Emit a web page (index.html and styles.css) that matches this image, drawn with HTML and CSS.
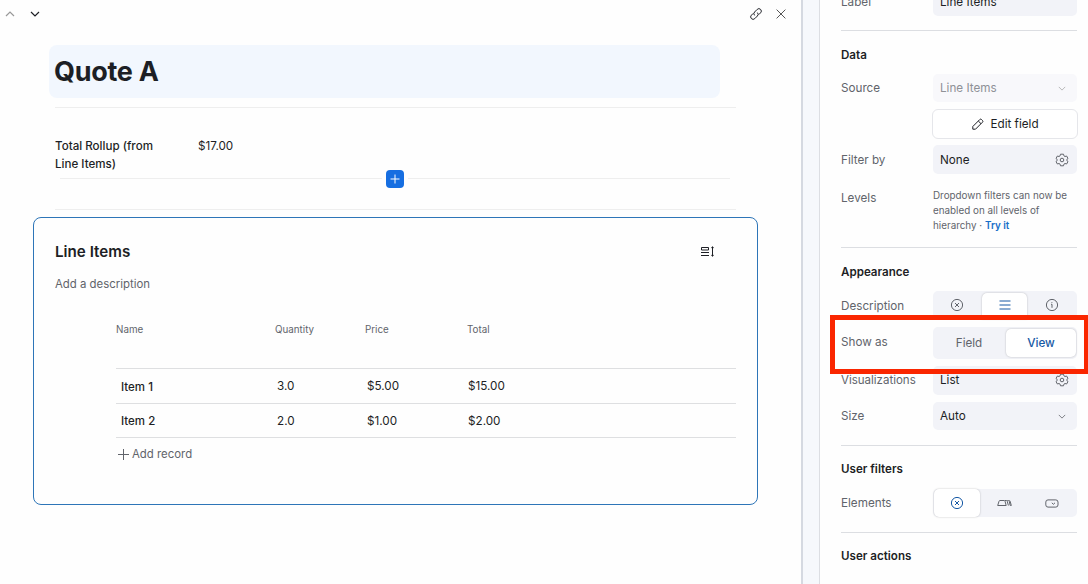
FILE: index.html
```
<!DOCTYPE html>
<html lang="en">
<head>
    <meta charset="UTF-8">
    <meta name="viewport" content="width=device-width, initial-scale=1.0">
    <title>Quote A</title>
    <link rel="stylesheet" href="styles.css">
</head>
<body>
    <!-- Shared icons -->
    <svg class="sprite" width="0" height="0">
        <symbol id="chevron" viewBox="0 0 10 6"><path d="M1 1l4 4 4-4"/></symbol>
        <symbol id="circle-x" viewBox="0 0 14 14"><circle cx="7" cy="7" r="5.6"/><path d="M5 5l4 4M9 5L5 9"/></symbol>
        <symbol id="gear" viewBox="0 0 14 14">
            <path d="M5.5 1.2h3l.4 1.6 1.1.7 1.6-.5 1.4 2.5-1.2 1v1l1.2 1-1.4 2.5-1.6-.5-1.1.7-.4 1.6h-3l-.4-1.6-1.1-.7-1.6.5L1 8.500l1.200-1v-1L1 5.500 2.400 3l1.600.5 1.100-.7z"/>
            <circle cx="7" cy="7" r="1.8"/>
        </symbol>
    </svg>

    <main class="record">
        <header class="toolbar">
            <svg class="icon chevron up" width="10" height="6"><use href="#chevron"/></svg>
            <svg class="icon chevron" width="10" height="6"><use href="#chevron"/></svg>
            <svg class="icon link" width="14" height="14" viewBox="0 0 14 14">
                <path d="M5.6 8.4a2.4 2.4 0 0 1 0-3.4l2.6-2.6a2.4 2.4 0 0 1 3.4 3.4L9.8 7.6"/>
                <path d="M8.4 5.6a2.4 2.4 0 0 1 0 3.4l-2.6 2.6a2.4 2.4 0 0 1-3.4-3.4L4.2 6.4"/>
            </svg>
            <svg class="icon close" width="10" height="10" viewBox="0 0 10 10"><path d="M.6.6l8.800 8.800M9.400.6L.6 9.400"/></svg>
        </header>

        <h1 class="title">Quote A</h1>

        <section class="fields">
            <div class="field">
                <span class="field-name">Total Rollup (from Line Items)</span>
                <span>$17.00</span>
            </div>
            <div class="insert">
                <span class="insert-line"></span>
                <button class="insert-btn">
                    <svg class="icon" width="10" height="10" viewBox="0 0 10 10"><path d="M5 .5v9M.5 5h9"/></svg>
                </button>
                <span class="insert-line"></span>
            </div>
        </section>

        <section class="card">
            <div class="card-head">
                <h2>Line Items</h2>
                <svg class="icon row-height" width="14" height="11" viewBox="0 0 14 11">
                    <path d="M1.5 1.5h7v2.500h-7zM1 6.500h8M1 9.500h8M12.500 1v9M11.300 1.800l1.200-1 1.200 1M11.300 9.200l1.200 1 1.200-1"/>
                </svg>
            </div>
            <p class="description">Add a description</p>
            <div class="table">
                <div class="row head"><span>Name</span><span>Quantity</span><span>Price</span><span>Total</span></div>
                <div class="row"><span class="name">Item 1</span><span>3.0</span><span>$5.00</span><span>$15.00</span></div>
                <div class="row"><span class="name">Item 2</span><span>2.0</span><span>$1.00</span><span>$2.00</span></div>
                <div class="add">
                    <svg class="icon" width="11" height="11" viewBox="0 0 11 11"><path d="M5.500 0v11M0 5.500h11"/></svg>
                    <span>Add record</span>
                </div>
            </div>
        </section>
    </main>

    <aside class="panel">
        <section class="group">
            <div class="setting">
                <label>Label</label>
                <div class="control">Line Items</div>
            </div>
        </section>

        <section class="group">
            <h3>Data</h3>
            <div class="setting">
                <label>Source</label>
                <div class="control disabled">Line Items <svg class="icon" width="8" height="5"><use href="#chevron"/></svg></div>
            </div>
            <button class="edit-btn">
                <svg class="icon" width="12" height="12" viewBox="0 0 12 12"><path d="M.8 11.200v-2.700l7-7a1.200 1.200 0 0 1 1.700 0l1 1a1.200 1.200 0 0 1 0 1.700l-7 7zM6.300 3l2.700 2.700"/></svg>
                Edit field
            </button>
            <div class="setting tall">
                <label>Filter by</label>
                <div class="control">None <svg class="icon gear" width="14" height="14"><use href="#gear"/></svg></div>
            </div>
            <div class="setting levels">
                <label>Levels</label>
                <p>Dropdown filters can now be enabled on all levels of hierarchy · <a>Try it</a></p>
            </div>
        </section>

        <section class="group">
            <h3>Appearance</h3>
            <div class="setting desc">
                <label>Description</label>
                <div class="segments">
                    <span><svg class="icon" width="14" height="14"><use href="#circle-x"/></svg></span>
                    <span class="active"><svg class="icon" width="12" height="10" viewBox="0 0 12 10"><path d="M.5 1h11M.5 5h11M.5 9h11"/></svg></span>
                    <span><svg class="icon" width="14" height="14" viewBox="0 0 14 14"><circle cx="7" cy="7" r="5.600"/><path d="M6 6.300h1v3.500M6.900 4v.8"/></svg></span>
                </div>
            </div>
            <div class="setting show-as">
                <label>Show as</label>
                <div class="segments two">
                    <span>Field</span>
                    <span class="active">View</span>
                </div>
                <div class="highlight"></div>
            </div>
            <div class="setting tall visual">
                <label>Visualizations</label>
                <div class="control">List <svg class="icon gear" width="14" height="14"><use href="#gear"/></svg></div>
            </div>
            <div class="setting size">
                <label>Size</label>
                <div class="control">Auto <svg class="icon" width="8" height="5"><use href="#chevron"/></svg></div>
            </div>
        </section>

        <section class="group filters">
            <h3>User filters</h3>
            <div class="setting">
                <label>Elements</label>
                <div class="segments">
                    <span class="active"><svg class="icon" width="14" height="14"><use href="#circle-x"/></svg></span>
                    <span><svg class="icon" width="15" height="8" viewBox="0 0 15 8"><path d="M9.200 6.500H.7L2 2.300Q2.300 1.500 3 1.500h4.200q.6 0 .8.700zM8 1.500h1.500q.5 0 .7.700l1.200 4.300M10.300 1.500h1.200q.5 0 .7.700l1 4.300M12.300 1.500q.6 0 .8.700l1.200 4.300h-1"/></svg></span>
                    <span><svg class="icon" width="14" height="9" viewBox="0 0 14 9"><rect x=".8" y=".9" width="12.200" height="7.200" rx="2.200"/><path d="M6.800 3.800l1.600 1.500L10 3.800"/></svg></span>
                </div>
            </div>
        </section>

        <section class="group last">
            <h3>User actions</h3>
        </section>
    </aside>
</body>
</html>
```

FILE: styles.css
```
* {
    box-sizing: border-box;
}

body {
    margin: 0;
    height: 584px;
    display: flex;
    overflow: hidden;
    background: #f6f8fc;
    font-family: Inter, "Liberation Sans", sans-serif;
    font-size: 11.7px;
    line-height: 16px;
    color: #1d1f25;
}

h1, h2, h3, p {
    margin: 0;
}

button {
    font: inherit;
    color: inherit;
    padding: 0;
    border: none;
}

.sprite {
    display: none;
}

.icon {
    display: block;
    flex: none;
    fill: none;
    stroke: currentColor;
    stroke-width: 1;
}

/* Record detail */
.record {
    width: 803px;
    background: #fefefe;
    border-right: 2px solid #d5d9e1;
}

.toolbar {
    display: flex;
    align-items: center;
    height: 28px;
    padding: 0 15px 0 5px;
    gap: 15px;
}

.chevron {
    stroke-width: 1.2;
}

.chevron.up {
    transform: rotate(180deg);
    color: #999;
}

.link {
    margin-left: auto;
    margin-right: -2px;
}

.close {
    color: #555;
}

.title {
    width: 671px;
    height: 53px;
    margin: 17px 0 0 49px;
    padding-left: 5px;
    border-radius: 8px;
    background: #f2f7fe;
    font-size: 27px;
    line-height: 53px;
    letter-spacing: -0.3px;
    font-weight: 700;
}

.fields {
    width: 681px;
    height: 103px;
    margin: 9px 0 0 55px;
    padding-top: 29px;
    border-top: 1px solid #eee;
    border-bottom: 1px solid #eee;
}

.field {
    display: grid;
    grid-template-columns: 110px 1fr;
    column-gap: 33px;
    line-height: 18px;
}

.field-name {
    font-size: 11.6px;
    font-weight: 500;
}

.insert {
    display: flex;
    align-items: center;
    gap: 4px;
    margin: -3px 6px 0 5px;
}

.insert-line {
    flex: 1;
    height: 1px;
    margin-bottom: 1px;
    background: #eee;
}

.insert-btn {
    width: 18px;
    height: 18px;
    display: flex;
    align-items: center;
    justify-content: center;
    border-radius: 4px;
    background: #166ee1;
    color: #fff;
}

.card {
    width: 725px;
    height: 288px;
    margin: 7px 0 0 33px;
    padding: 24px 21px 0;
    border: 1px solid #2d75b8;
    border-radius: 8px;
}

.card-head {
    display: flex;
    align-items: center;
    justify-content: space-between;
    padding-right: 22px;
    height: 19px;
}

h2 {
    font-size: 15.2px;
    line-height: 20px;
    font-weight: 600;
}

.description {
    margin-top: 15px;
    font-size: 11.4px;
    color: #61646b;
}

.table {
    width: 620px;
    margin: 26px 0 0 61px;
}

.row {
    display: grid;
    grid-template-columns: 156px 90px 101px 1fr;
    align-items: center;
    height: 34px;
    padding-left: 5px;
    border-bottom: 1px solid #dedfe1;
}

.row + .row:nth-child(2) {
    height: 35px;
}

.row.head {
    grid-template-columns: 159px 90px 102px 1fr;
    align-items: start;
    height: 51px;
    padding: 4px 0 0;
    font-size: 9.8px;
    line-height: 16px;
    color: #61646b;
}

.name {
    font-weight: 500;
    font-size: 11.5px;
    padding-top: 1px;
}

.add {
    display: flex;
    align-items: center;
    gap: 3px;
    padding: 8px 0 0 2px;
    font-size: 11.4px;
    color: #61646b;
}

/* Settings panel */
.panel {
    width: 269px;
    margin-left: 16px;
    padding-left: 21px;
    border-left: 1px solid #dcdee3;
    background: #fefefe;
}

.group {
    width: 236px;
    padding-top: 16px;
    padding-bottom: 14px;
}

.group + .group {
    border-top: 1px solid #dcdee2;
}

.group:first-child {
    margin-top: -28px;
}

h3 {
    font-size: 11.6px;
    line-height: 16px;
    font-weight: 600;
    margin-bottom: 11px;
}

.setting {
    display: grid;
    grid-template-columns: 92px 144px;
    align-items: center;
}

.setting label {
    color: #61646b;
}

.control {
    display: flex;
    align-items: center;
    justify-content: space-between;
    height: 28px;
    padding: 0 11px 0 7px;
    border-radius: 5px;
    background: #f2f3f8;
}

.control .icon {
    color: #61646b;
}

.control .gear {
    margin-right: -3px;
}

.control.disabled {
    color: #8f9197;
    background: #f8f8fb;
}

.control.disabled .icon {
    color: #aaa;
}

.tall .control {
    height: 29px;
}

.visual label {
    margin-top: -1px;
    font-size: 11.5px;
}

.visual .control {
    padding-bottom: 1px;
}

.edit-btn {
    display: flex;
    align-items: center;
    justify-content: center;
    gap: 6px;
    width: 146px;
    height: 30px;
    margin: 7px 0 6px 91px;
    padding-left: 1px;
    border: 1px solid #e5e6ea;
    border-radius: 6px;
    background: #fff;
}

.levels {
    align-items: start;
    margin-top: 14px;
}

.levels label {
    padding-top: 2px;
}

.levels p {
    margin-right: -8px;
    font-size: 9.85px;
    line-height: 15px;
    color: #61646b;
}

.levels a {
    color: #166ec8;
    font-weight: 600;
}

.segments {
    display: grid;
    grid-template-columns: 48px 47px 47px;
    align-items: center;
    height: 28px;
    padding-right: 2px;
    border-radius: 5px;
    background: #f2f3f8;
    color: #61646b;
}

.segments span {
    display: flex;
    align-items: center;
    justify-content: center;
    height: 28px;
}

.segments .active {
    margin: 0 1px;
    border-radius: 5px;
    background: #fff;
    color: #1659a5;
    box-shadow: 0 0 2px rgba(0, 0, 0, 0.25);
}

.segments.two {
    grid-template-columns: 72px 71px;
    padding-right: 1px;
    height: 32px;
}

.two .active {
    margin: 0 0 0 1px;
    font-weight: 500;
}

.desc label {
    padding-top: 2px;
}

.desc .active {
    height: 26px;
    margin-top: 2px;
    padding-bottom: 2px;
    border-radius: 5px 5px 0 0;
}

.show-as {
    position: relative;
    margin: 8px 0 7px;
}

.show-as label {
    margin-top: -2px;
}

/* Red callout drawn over the neighbouring rows */
.highlight {
    position: absolute;
    left: -11px;
    top: -12px;
    width: 259px;
    height: 59px;
    border: 5px solid #fa2600;
}

.size {
    margin: 7px 0 1px;
}

.filters {
    padding-top: 15px;
    padding-bottom: 15px;
}

.filters h3 {
    margin-bottom: 12px;
}

.last {
    padding-top: 15px;
}
```
